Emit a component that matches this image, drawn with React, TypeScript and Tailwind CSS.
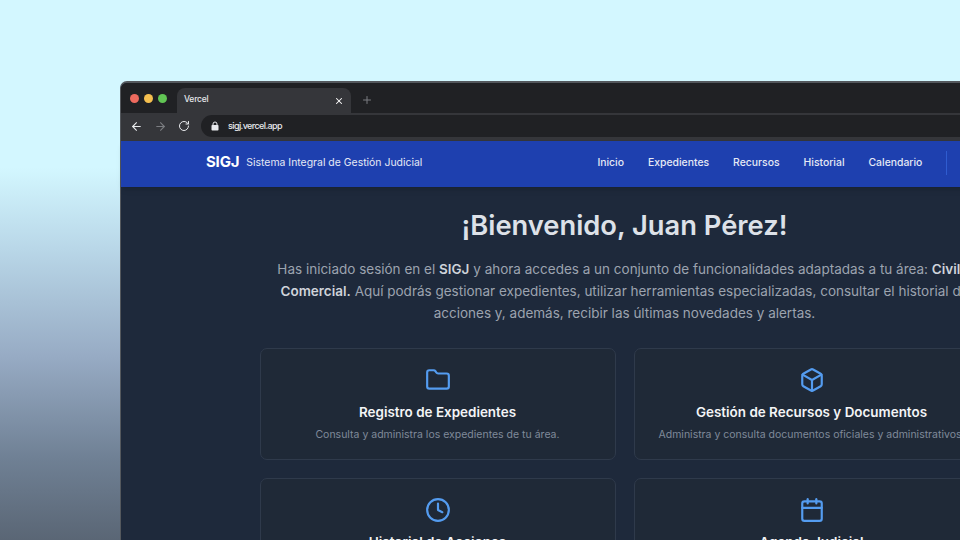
import { ArrowLeft, ArrowRight, Box, Calendar, Clock, Folder, Plus, RotateCw, X } from 'lucide-react';

const navLinks = ['Inicio', 'Expedientes', 'Recursos', 'Historial', 'Calendario'];

const cards = [
  {
    title: 'Registro de Expedientes',
    text: 'Consulta y administra los expedientes de tu área.',
    icon: Folder,
  },
  {
    title: 'Gestión de Recursos y Documentos',
    text: 'Administra y consulta documentos oficiales y administrativos.',
    icon: Box,
  },
  {
    title: 'Historial de Acciones',
    text: 'Revisa el registro de tus acciones recientes.',
    icon: Clock,
  },
  {
    title: 'Agenda Judicial',
    text: 'Consulta audiencias y fechas importantes.',
    icon: Calendar,
  },
];

export default function App() {
  return (
    <div className="w-[960px] h-[540px] overflow-hidden pl-[120px] pt-[81px] bg-[linear-gradient(180deg,#d3f7ff_0%,#d3f7ff_31%,#b9d7e8_46%,#97abc4_66%,#6f8094_85%,#5a6675_100%)] font-['Inter',sans-serif]">
      <div className="w-[1008px] h-[600px] rounded-t-[7px] border-l border-t-2 border-[#54585d] bg-[#1e293b] flex flex-col">
        {/* Tab strip */}
        <div className="h-[30px] bg-[#202124] rounded-t-[6px] flex items-end shrink-0">
          <div className="flex items-center gap-[5px] pl-[9px] pr-[10px] pb-[10px]">
            <span className="w-[9px] h-[9px] rounded-full bg-[#ed6a5e]" />
            <span className="w-[9px] h-[9px] rounded-full bg-[#f4bf4f]" />
            <span className="w-[9px] h-[9px] rounded-full bg-[#61c554]" />
          </div>
          <div className="w-[174px] h-[25px] bg-[#35363a] rounded-t-[8px] flex items-center justify-between pl-[7px] pr-[7px] text-[8.5px] font-medium text-[#e8eaed]">
            <span className="mb-[3px] tracking-[-0.2px]">Vercel</span>
            <X className="w-[10px] h-[10px] text-white" strokeWidth={2.5} />
          </div>
          <Plus className="w-[12px] h-[12px] ml-[10px] mb-[7px] text-[#7b7d81]" strokeWidth={2} />
        </div>
        {/* Toolbar */}
        <div className="h-[28px] bg-[#35363a] flex items-center pl-[9px] pb-[2px] shrink-0">
          <ArrowLeft className="w-[13px] h-[13px] text-[#e8eaed]" strokeWidth={2} />
          <ArrowRight className="w-[13px] h-[13px] ml-[11px] text-[#7b7d81]" strokeWidth={2} />
          <RotateCw className="w-[12px] h-[12px] ml-[11px] text-[#e8eaed]" strokeWidth={2} />
          <div className="ml-[11px] h-[22px] flex-1 mr-2 rounded-full bg-[#202124] flex items-center pl-[10px] gap-[9px]">
            <svg viewBox="0 0 8 10" className="w-[8px] h-[10px]">
              <path d="M2 4.5V3a2 2 0 0 1 4 0v1.5" fill="none" stroke="#e8eaed" strokeWidth="1" />
              <rect x="0.5" y="4" width="7" height="5.5" rx="0.8" fill="#e8eaed" />
            </svg>
            <span className="text-[9px] font-medium tracking-[-0.6px] text-[#e8eaed]">sigj.vercel.app</span>
          </div>
        </div>
        {/* App header */}
        <header className="h-[46px] bg-[#1e40af] shadow-md flex items-center pl-[85px] pb-[3px] shrink-0">
          <span className="text-[15px] font-bold text-white tracking-[-0.2px]">SIGJ</span>
          <span className="ml-[7px] text-[10.45px] text-[#e5e9f5]">Sistema Integral de Gestión Judicial</span>
          <nav className="ml-[175px] flex items-center gap-[24px] text-[10.4px] font-medium text-[#e5e9f5]">
            {navLinks.map((link) => (
              <span key={link}>{link}</span>
            ))}
          </nav>
          <div className="ml-[24px] w-px h-[24px] bg-[#2f5cd0]" />
        </header>
        {/* Main */}
        <main className="flex flex-col items-center pt-[21px]">
          <h1 className="text-[27.3px] leading-[36px] font-semibold text-[#dde1e8]">¡Bienvenido, Juan Pérez!</h1>
          <p className="mt-[14px] w-[730px] text-center text-[13.5px] leading-[22px] text-[#9ca3af]">
            Has iniciado sesión en el <strong className="font-semibold text-[#cfd3da]">SIGJ</strong> y ahora accedes a un conjunto de funcionalidades adaptadas a tu área: <strong className="font-semibold text-[#cfd3da]">Civil y Comercial.</strong> Aquí podrás gestionar expedientes, utilizar herramientas especializadas, consultar el historial de acciones y, además, recibir las últimas novedades y alertas.
          </p>
          <div className="mt-[24px] w-[730px] grid grid-cols-2 gap-[18px]">
            {cards.map((card) => {
              const Icon = card.icon;
              return (
                <div
                  key={card.title}
                  className="h-[112px] rounded-[7px] border border-[#2f3a4b] bg-[#1f2937] flex flex-col items-center pt-[18px]"
                >
                  <Icon className="w-[26px] h-[26px] text-[#549cf0]" strokeWidth={2} />
                  <h3 className="mt-[10px] text-[13.45px] leading-[18px] font-semibold text-[#f3f4f6]">{card.title}</h3>
                  <p className="mt-[6px] text-[10.5px] leading-[16px] text-[#7f8a9a]">{card.text}</p>
                </div>
              );
            })}
          </div>
        </main>
      </div>
    </div>
  );
}
